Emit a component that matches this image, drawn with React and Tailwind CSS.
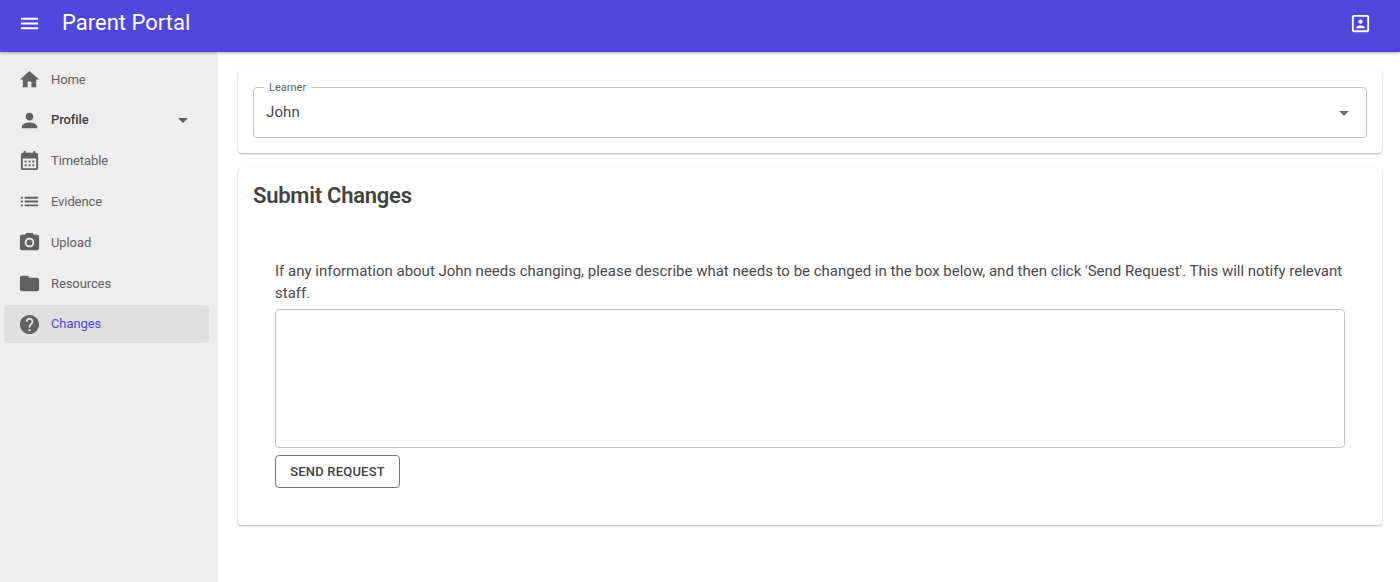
const Icon = ({ d, className }) => (
    <svg viewBox="0 0 24 24" fill="currentColor" className={className}>
        <path d={d} />
    </svg>
);

const icons = {
    menu: "M3 18h18v-2H3v2zm0-5h18v-2H3v2zm0-7v2h18V6H3z",
    home: "M10 20v-6h4v6h5v-8h3L12 3 2 12h3v8z",
    person: "M12 12c2.21 0 4-1.79 4-4s-1.79-4-4-4-4 1.79-4 4 1.79 4 4 4zm0 2c-2.67 0-8 1.34-8 4v2h16v-2c0-2.66-5.33-4-8-4z",
    calendar: "M19 4h-1V2h-2v2H8V2H6v2H5c-1.11 0-1.99.9-1.99 2L3 20c0 1.1.89 2 2 2h14c1.1 0 2-.9 2-2V6c0-1.1-.9-2-2-2zm0 16H5V10h14v10zM9 14H7v-2h2v2zm4 0h-2v-2h2v2zm4 0h-2v-2h2v2zm-8 4H7v-2h2v2zm4 0h-2v-2h2v2zm4 0h-2v-2h2v2z",
    list: "M3 13h2v-2H3v2zm0 4h2v-2H3v2zm0-8h2V7H3v2zm4 4h14v-2H7v2zm0 4h14v-2H7v2zM7 7v2h14V7H7z",
    camera: "M12 8.8a3.2 3.2 0 1 0 0 6.4 3.2 3.2 0 0 0 0-6.4zM9 2 7.17 4H4c-1.1 0-2 .9-2 2v12c0 1.1.9 2 2 2h16c1.1 0 2-.9 2-2V6c0-1.1-.9-2-2-2h-3.17L15 2H9zm3 15c-2.76 0-5-2.24-5-5s2.24-5 5-5 5 2.24 5 5-2.24 5-5 5z",
    folder: "M10 4H4c-1.1 0-1.99.9-1.99 2L2 18c0 1.1.9 2 2 2h16c1.1 0 2-.9 2-2V8c0-1.1-.9-2-2-2h-8l-2-2z",
    help: "M12 2C6.48 2 2 6.48 2 12s4.48 10 10 10 10-4.48 10-10S17.52 2 12 2zm1 17h-2v-2h2v2zm2.07-7.75-.9.92C13.45 12.9 13 13.5 13 15h-2v-.5c0-1.1.45-2.1 1.17-2.83l1.24-1.26c.37-.36.59-.86.59-1.41 0-1.1-.9-2-2-2s-2 .9-2 2H8c0-2.21 1.79-4 4-4s4 1.79 4 4c0 .88-.36 1.68-.93 2.25z",
    arrow: "m7 10 5 5 5-5z",
    portrait: "M12 12.25c1.24 0 2.25-1.01 2.25-2.25S13.24 7.75 12 7.75 9.75 8.76 9.75 10s1.01 2.25 2.25 2.25zm4.5 4c0-1.5-3-2.25-4.5-2.25s-4.5.75-4.5 2.25V17h9v-.75zM19 3H5c-1.1 0-2 .9-2 2v14c0 1.1.9 2 2 2h14c1.1 0 2-.9 2-2V5c0-1.1-.9-2-2-2zm0 16H5V5h14v14z",
};

const navItems = [
    { label: "Home", icon: icons.home },
    { label: "Profile", icon: icons.person, bold: true, arrow: true },
    { label: "Timetable", icon: icons.calendar },
    { label: "Evidence", icon: icons.list },
    { label: "Upload", icon: icons.camera },
    { label: "Resources", icon: icons.folder },
    { label: "Changes", icon: icons.help, active: true },
];

const NavItem = ({ item }) => (
    <div
        className={`flex items-center h-[38px] mb-[2.8px] pl-[14px] pr-4 rounded ${
            item.active ? "bg-[#e0e0e0]" : ""
        }`}
    >
        <Icon d={item.icon} className="w-[23px] h-[23px] text-[#616161] shrink-0" />
        <span
            className={`ml-[10px] text-[13px] tracking-[-0.1px] ${
                item.active
                    ? "text-[#4f46e5]"
                    : item.bold
                      ? "font-medium text-[#424242]"
                      : "text-[#616161]"
            }`}
        >
            {item.label}
        </span>
        {item.arrow && (
            <Icon d={icons.arrow} className="w-6 h-6 ml-auto -mr-[2px] text-[#616161]" />
        )}
    </div>
);

export default function App() {
    return (
        <div className="h-[582px] flex flex-col bg-white font-['Roboto',sans-serif] overflow-hidden">
            <header className="relative z-10 h-[52px] shrink-0 flex items-center pl-[18px] pr-[28px] bg-[#4f46dc] text-white shadow-[0_1px_3px_rgba(0,0,0,0.3)]">
                <Icon d={icons.menu} className="w-[23px] h-[23px] mb-[6px]" />
                <h1 className="ml-[21px] mb-[6px] text-[22px] leading-none">Parent Portal</h1>
                <Icon d={icons.portrait} className="w-[23px] h-[23px] ml-auto mb-[6px]" />
            </header>

            <div className="flex flex-1 min-h-0">
                <nav className="w-[218px] shrink-0 bg-[#eeeeee] pt-[8.4px] pl-1 pr-[9px]">
                    {navItems.map((item) => (
                        <NavItem key={item.label} item={item} />
                    ))}
                </nav>

                <main className="flex-1 pl-5 pr-[18px] pt-[18px]">
                    <section className="bg-white rounded shadow-[0_1px_2px_rgba(0,0,0,0.3)] px-[15px] pt-[10px] pb-[15px]">
                        <fieldset className="h-[58px] border border-[#c4c4c4] rounded pl-2 pr-4 flex items-center justify-between">
                            <legend className="ml-[2px] px-[5px] text-[11px] leading-[14px] text-[#616161] translate-y-[1px]">
                                Learner
                            </legend>
                            <span className="ml-[4px] mb-[7px] text-[15px] tracking-[0.1px] text-[#4a4a4a]">John</span>
                            <Icon d={icons.arrow} className="w-6 h-6 -mr-[6px] mb-[6px] text-[#757575]" />
                        </fieldset>
                    </section>

                    <section className="mt-[15px] h-[357px] bg-white rounded shadow-[0_1px_2px_rgba(0,0,0,0.3)] px-[15px] pt-[14px]">
                        <h2 className="text-[22px] leading-[28px] font-semibold tracking-[-0.25px] text-[#424242]">
                            Submit Changes
                        </h2>
                        <div className="px-[22px] pt-[50px]">
                            <p className="text-[15px] leading-[22px] text-[#4a4a4a]">
                                If any information about John needs changing, please describe what needs to be changed in the box below, and then click 'Send Request'. This will notify relevant staff.
                            </p>
                            <div className="mt-[5px] h-[139px] border border-[#c4c4c4] rounded" />
                            <button className="mt-[7px] h-[33px] w-[125px] border border-[#757575] rounded text-[13px] font-medium tracking-[0.2px] text-[#424242]">
                                SEND REQUEST
                            </button>
                        </div>
                    </section>
                </main>
            </div>
        </div>
    );
}
